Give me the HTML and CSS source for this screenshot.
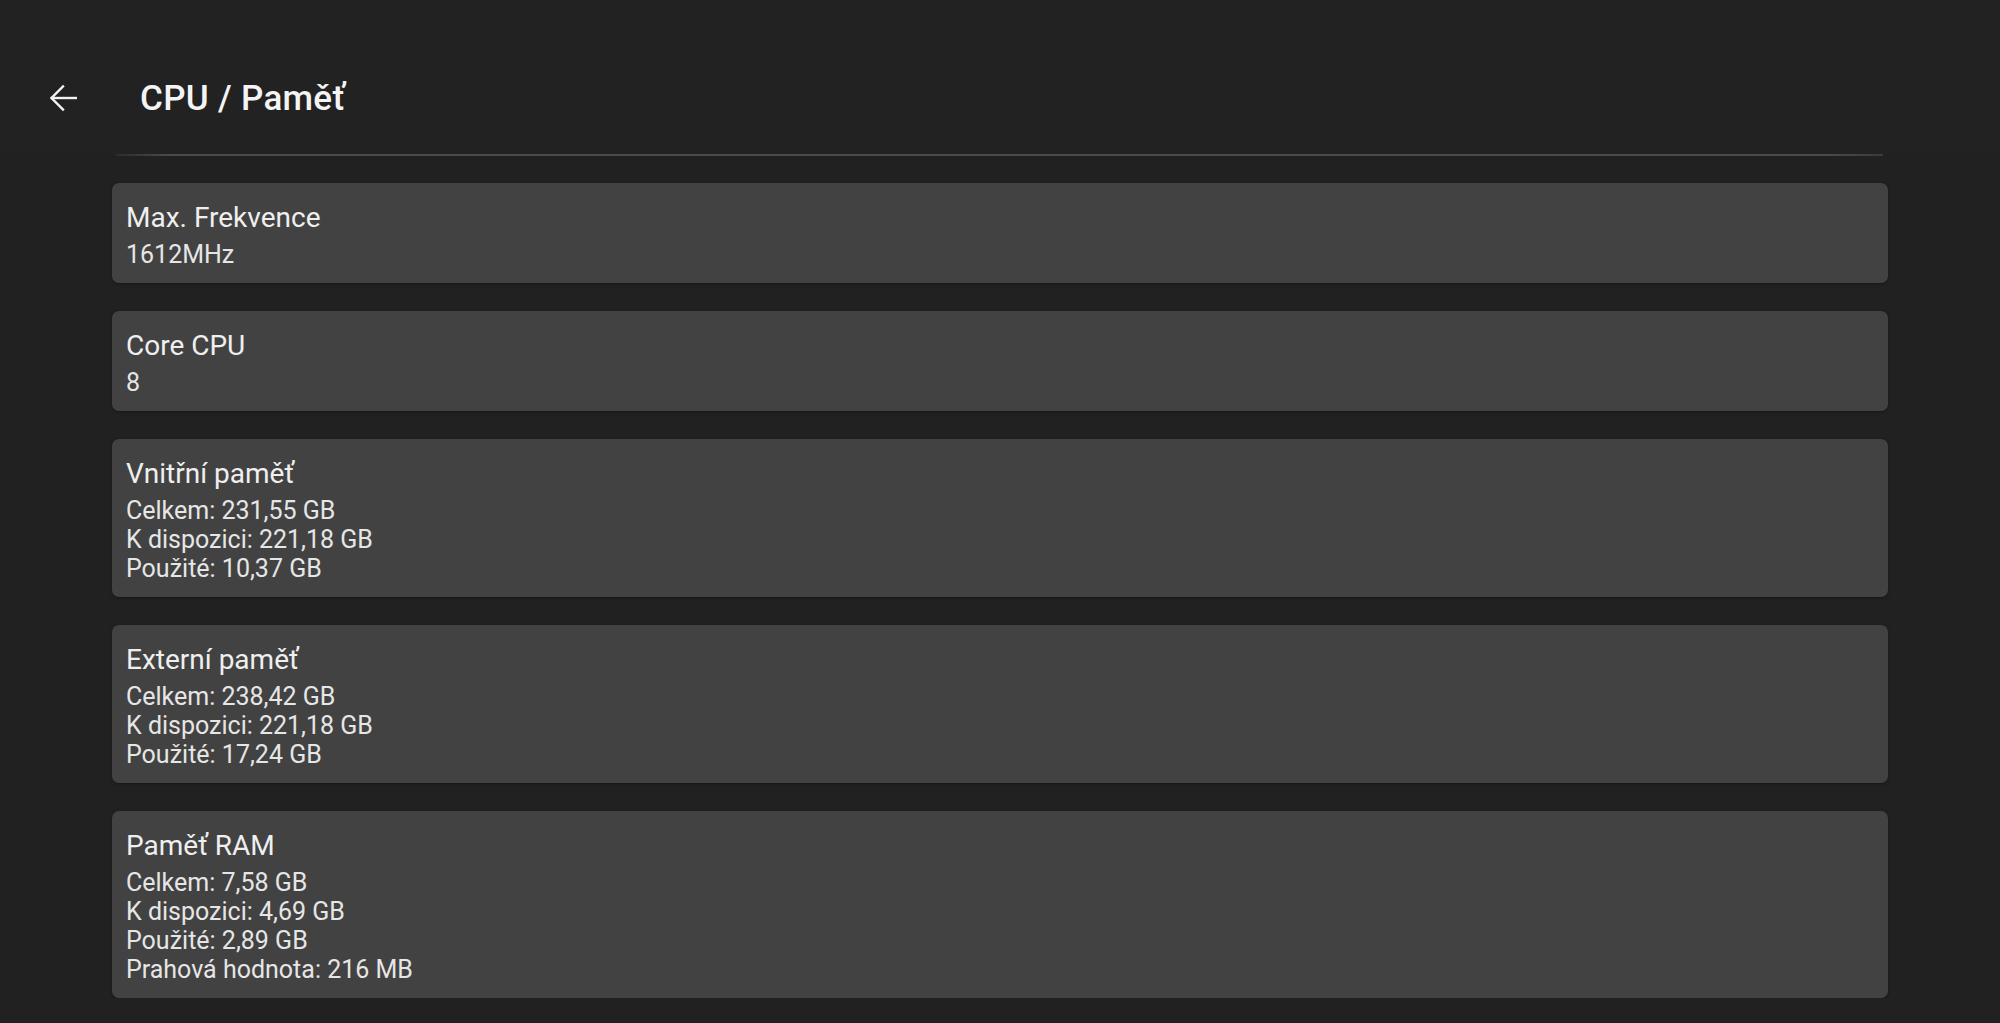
FILE: index.html
```html
<!DOCTYPE html>
<html lang="cs">
<head>
<meta charset="utf-8">
<title>CPU / Paměť</title>
<link rel="stylesheet" href="styles.css">
</head>
<body>
<header class="toolbar">
  <button class="back" aria-label="Zpět">
    <svg width="28" height="28" viewBox="0 0 28 28" fill="none" stroke="#f2f2f2" stroke-width="2.4" stroke-linecap="square">
      <path d="M27 14H3"/>
      <path d="M14 2.5L2.5 14L14 25.5"/>
    </svg>
  </button>
  <h1 class="title">CPU / Paměť</h1>
</header>
<div class="divider"></div>
<main class="list">
  <section class="card">
    <div class="card-title">Max. Frekvence</div>
    <div class="card-value">1612MHz</div>
  </section>
  <section class="card">
    <div class="card-title">Core CPU</div>
    <div class="card-value">8</div>
  </section>
  <section class="card">
    <div class="card-title">Vnitřní paměť</div>
    <div class="card-value">Celkem: 231,55 GB<br>K dispozici: 221,18 GB<br>Použité: 10,37 GB</div>
  </section>
  <section class="card">
    <div class="card-title">Externí paměť</div>
    <div class="card-value">Celkem: 238,42 GB<br>K dispozici: 221,18 GB<br>Použité: 17,24 GB</div>
  </section>
  <section class="card">
    <div class="card-title">Paměť RAM</div>
    <div class="card-value">Celkem: 7,58 GB<br>K dispozici: 4,69 GB<br>Použité: 2,89 GB<br>Prahová hodnota: 216 MB</div>
  </section>
</main>
</body>
</html>
```
FILE: styles.css
```css
html, body {
  margin: 0;
  padding: 0;
  background: #212121;
  font-family: Roboto, "Noto Sans", "Liberation Sans", sans-serif;
  color: #ededed;
  overflow: hidden;
}

.toolbar {
  height: 154px;
  display: flex;
  align-items: center;
  background: #222222;
  padding-top: 42px;
  box-sizing: border-box;
}

.back {
  width: 28px;
  height: 28px;
  margin-left: 49px;
  padding: 0;
  border: 0;
  background: none;
  display: flex;
  align-items: center;
  justify-content: center;
}

.back svg {
  display: block;
}

.title {
  margin: 0 0 0 63px;
  font-size: 35px;
  font-weight: 500;
  letter-spacing: 0.3px;
  color: #f4f4f4;
  line-height: 41px;
}

.divider {
  height: 2px;
  margin: 0 117px 0 116px;
  background: linear-gradient(to right, #2c2c2c, #4a4a4a 3%, #4a4a4a 97%, #3a3a3a);
}

.list {
  display: flex;
  flex-direction: column;
  gap: 28px;
  padding: 27px 112px 0 112px;
}

.card {
  background: #424242;
  border-radius: 7px;
  padding: 18px 14px 14px 14px;
  box-shadow: 0 1px 3px rgba(0, 0, 0, 0.35);
}

.card-title {
  font-size: 28px;
  line-height: 33px;
  color: #efefef;
  margin-bottom: 6px;
}

.card-value {
  font-size: 25px;
  line-height: 29px;
  color: #e6e6e6;
}
```
